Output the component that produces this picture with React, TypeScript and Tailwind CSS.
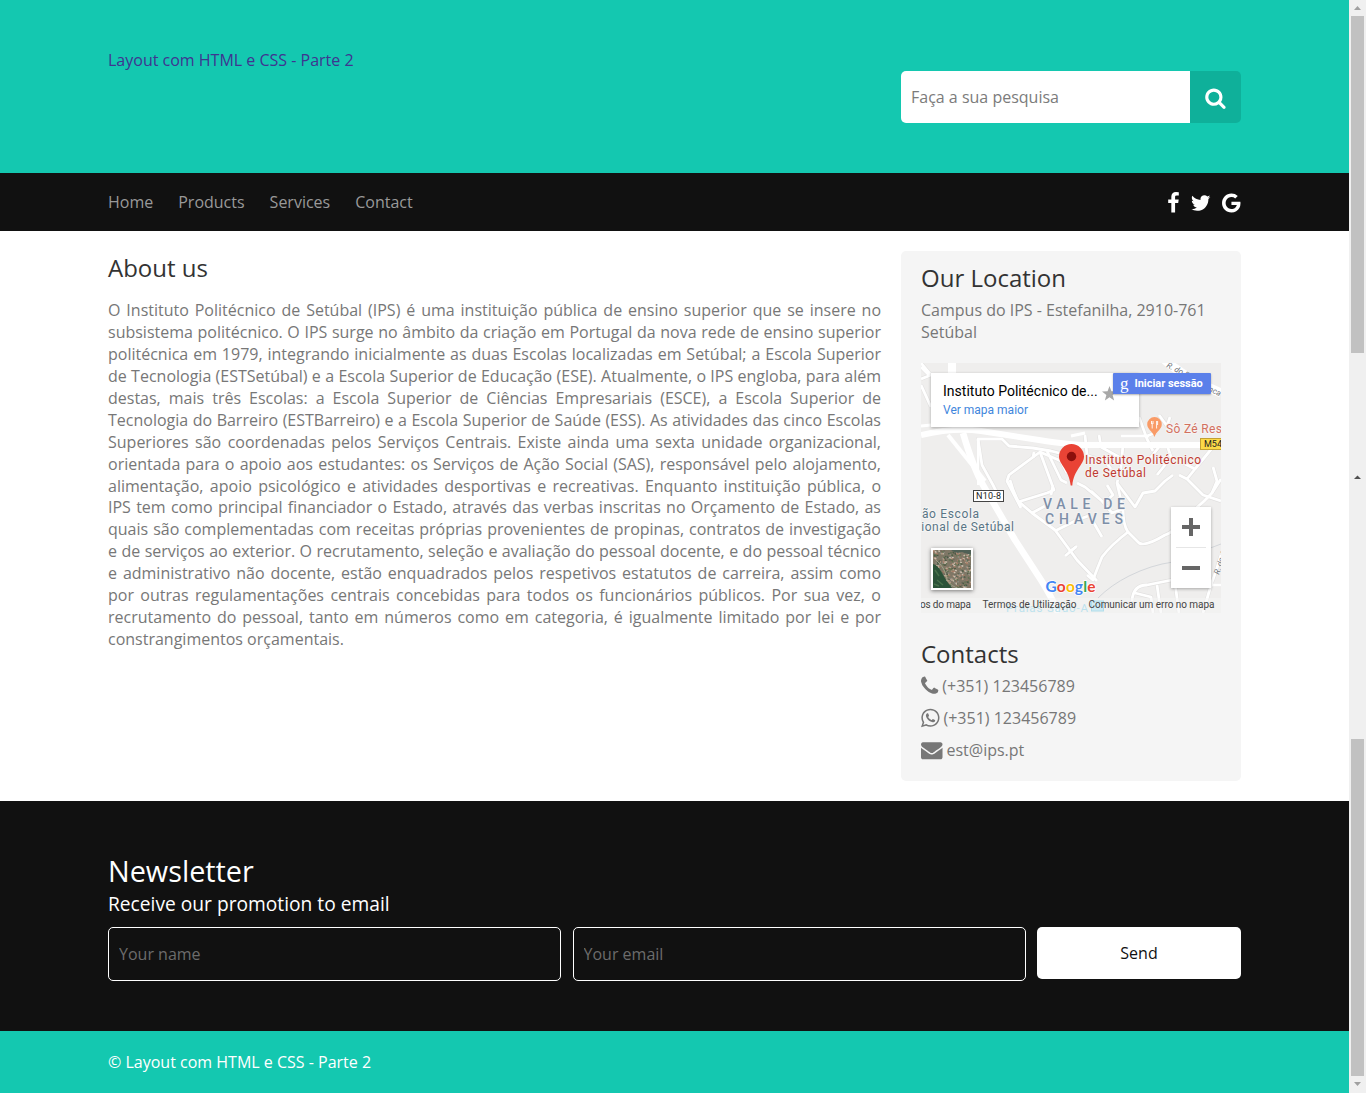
import React from "react";

const ICONS = {
  search: {
    box: "64 0 1728 1792",
    w: "w-[21.2px]",
    d: "M1152 832q0-185-131.5-316.5t-316.5-131.5-316.5 131.5-131.5 316.5 131.5 316.5 316.5 131.5 316.5-131.5 131.5-316.5zm512 832q0 52-38 90t-90 38q-54 0-90-38l-343-342q-179 124-399 124-143 0-273.5-55.5t-225-150-150-225-55.5-273.5 55.5-273.5 150-225 225-150 273.5-55.5 273.5 55.5 225 150 150 225 55.5 273.5q0 220-124 399l343 343q37 37 37 90z",
  },
  facebook: {
    box: "479 0 864 1792",
    w: "w-[11px]",
    d: "M1343 12v264h-157q-86 0-116 36t-30 108v189h293l-39 296h-254v759h-306v-759h-255v-296h255v-218q0-186 104-288.5t277-102.5q147 0 228 12z",
  },
  twitter: {
    box: "108 0 1576 1792",
    w: "w-[19.4px]",
    d: "M1684 408q-67 98-162 167 1 14 1 42 0 130-38 259.5t-115.5 248.5-184.5 210.5-258 146-323 54.5q-271 0-496-145 35 4 78 4 225 0 401-138-105-2-188-64.5t-114-159.5q33 5 61 5 43 0 85-11-112-23-185.5-111.5t-73.5-205.5v-4q68 38 146 41-66-44-105-115t-39-154q0-88 44-163 121 149 294.5 238.5t371.5 99.5q-8-38-8-74 0-134 94.5-228.5t228.5-94.5q140 0 236 102 109-21 205-78-37 115-142 178 93-10 186-50z",
  },
  google: {
    box: "128 0 1505 1792",
    w: "w-[18.5px]",
    d: "M896 786h725q12 67 12 128 0 217-91 387.5t-259.5 266.5-386.5 96q-157 0-299-60.5t-245-163.5-163.5-245-60.5-299 60.5-299 163.5-245 245-163.5 299-60.5q300 0 515 201l-209 201q-123-119-306-119-129 0-238.5 65t-173.5 176.5-64 243.5 64 243.5 173.5 176.5 238.5 65q87 0 160-24t120-60 82-82 51.5-87 22.5-78h-436v-264z",
  },
  phone: {
    box: "192 0 1408 1792",
    w: "w-[17.3px]",
    d: "M1600 1240q0 27-10 70.5t-21 68.5q-21 50-122 106-94 51-186 51-27 0-53-3.5t-57.5-12.5-47-14.5-55.5-20.5-49-18q-98-35-175-83-127-79-264-216t-216-264q-48-77-83-175-3-9-18-49t-20.5-55.5-14.5-47-12.5-57.5-3.5-53q0-92 51-186 56-101 106-122 25-11 68.5-21t70.5-10q14 0 21 3 18 6 53 76 11 19 30 54t35 63.5 31 53.5q3 4 17.5 25t21.5 35.5 7 28.5q0 20-28.5 50t-62 55-62 53-28.5 46q0 9 5 22.5t8.5 20.5 14 24 11.5 19q76 137 174 235t235 174q2 1 19 11.5t24 14 20.5 8.5 22.5 5q18 0 46-28.5t53-62 55-62 50-28.5q14 0 28.5 7t35.5 21.5 25 17.5q25 15 53.5 31t63.5 35 54 30q70 35 76 53 3 7 3 21z",
  },
  whatsapp: {
    box: "128 0 1536 1792",
    w: "w-[18.5px]",
    d: "M1113 974q13 0 97.5 44t89.5 53q2 5 2 15 0 33-17 76-16 39-71 65.5t-102 26.5q-57 0-190-62-98-45-170-118t-148-185q-72-107-71-194v-8q3-91 74-158 24-22 52-22 6 0 18 1.5t19 1.5q19 0 26.5 6.5t15.5 27.5q8 20 33 88t25 75q0 21-34.5 57.5t-34.5 46.5q0 7 5 15 34 73 102 137 56 53 151 101 12 7 22 7 15 0 54-48.5t52-48.5zm-203 530q127 0 243.5-50t200.5-134 134-200.5 50-243.5-50-243.5-134-200.5-200.5-134-243.5-50-243.5 50-200.5 134-134 200.5-50 243.5q0 203 120 368l-79 233 242-77q158 104 345 104zm0-1382q153 0 292.5 60t240.5 161 161 240.5 60 292.5-60 292.5-161 240.5-240.5 161-292.5 60q-195 0-365-94l-417 134 136-405q-108-178-108-389 0-153 60-292.5t161-240.5 240.5-161 292.5-60z",
  },
  envelope: {
    box: "0 0 1792 1792",
    w: "w-[21.5px]",
    d: "M1792 710v794q0 66-47 113t-113 47h-1472q-66 0-113-47t-47-113v-794q44 49 101 87 362 246 497 345 57 42 92.5 65.5t94.5 48 110 24.5h2q51 0 110-24.5t94.5-48 92.5-65.5q170-123 498-345 57-39 100-87zm0-294q0 79-49 151t-122 123q-376 261-468 325-10 7-42.5 31t-54 38-52 32.5-57.5 27-50 9h-2q-23 0-50-9t-57.5-27-52-32.5-54-38-42.5-31q-91-64-262-182.5t-205-142.5q-62-42-117-115.5t-55-136.5q0-78 41.5-130t118.5-52h1472q65 0 112.5 47t47.5 113z",
  },
};

function Icon({ name }: { name: keyof typeof ICONS }) {
  const i = ICONS[name];
  return (
    <svg viewBox={i.box} className={`h-[22px] shrink-0 overflow-visible fill-current ${i.w}`}>
      <path d={i.d} />
    </svg>
  );
}

const ROADS = [
  "M0 0L9 11M0 16L10 12M0 22L10 44M0 4L8 12",
  "M57 122L57 76L81 76L88 83L112 85L130 88L146 92",
  "M57 76L61 102L72 122L76 130",
  "M100 145L86 118L88 112L119 89L140 98L146 110",
  "M113 89L112 95M119 89L133 127L126 130L97 139M126 88L140 117L146 120M132 122L130 132",
  "M89 117Q92 128 97 138L111 150L134 167L156 197L176 218",
  "M111 150L124 143M134 168L156 157L170 152M148 189L156 183",
  "M156 120L164 124L181 138L191 150L202 146M181 138L170 128",
  "M202 82L200 104L196 120L202 146Q202 162 207 169Q190 182 181 194Q176 206 172 217L166 212",
  "M170 155L181 174M196 120L214 144L222 130L234 128L244 118L252 112",
  "M207 169L218 180Q224 184 244 172Q252 170 261 157Q280 142 291 130L300 116",
  "M144 193L155 184M185 138L192 132L186 122",
  "M164 72L166 92M178 72L180 84L198 94M164 92L184 98L190 106",
  "M218 54L226 76L232 88M200 73L228 73M226 73L236 69M238 52L246 63L249 54M240 61L236 65",
  "M246 82L250 94L274 106L266 116L258 112M238 84L230 94L244 102L236 112M274 106L292 84M266 116L282 132L300 138",
  "M211 238Q212 222 226 222L251 217L270 222L300 222M236 222L240 250M254 220L258 250M214 230L230 234L232 250",
  "M300 192Q296 206 290 222L282 250M291 130L296 118L292 104",
];

function MapDrawing() {
  return (
    <svg viewBox="0 0 300 250" className="block h-[250px] w-[300px]" fontFamily="Roboto, sans-serif">
      <rect width="300" height="250" fill="#efeeed" />
      <g fill="none" stroke="#e2e1e0" strokeLinejoin="round">
        {ROADS.map((d) => (
          <path key={d} d={d} strokeWidth="4" />
        ))}
      </g>
      <path d="M177 235Q190 222 208 213Q230 202 252 199Q276 190 300 181" fill="none" stroke="#d3d6da" strokeWidth="1" />
      <g fill="none" stroke="#fff" strokeLinejoin="round">
        {ROADS.map((d) => (
          <path key={d} d={d} strokeWidth="2.8" />
        ))}
        <path d="M31 0V14" strokeWidth="8" />
        <path d="M27 72L64 118" strokeWidth="4" />
        <path d="M42 70Q52 104 62 122L94 177L120 217Q132 236 137 250" strokeWidth="6.5" />
        <path d="M0 72Q34 64 60 68T118 77T165 82H300" strokeWidth="6" />
        <path d="M0 63L20 61M150 73L164 70" strokeWidth="3" />
        <path d="M244 -3Q262 14 300 30" strokeWidth="9" />
      </g>

      <text x="245" y="4" fontSize="8" fontStyle="italic" fill="#6f7378" transform="rotate(27 245 4)">R. do Pa</text>
      <text x="287" y="28" fontSize="8" fontStyle="italic" fill="#6f7378" transform="rotate(24 287 28)">nca</text>
      <text x="298" y="212" fontSize="8" fontStyle="italic" fill="#6f7378" transform="rotate(-72 298 212)">R. do A</text>

      <path d="M233.5 54a7.3 7.3 0 0 1 7.3 7.3c0 5-5 6.5-7.3 12.7c-2.3-6.2-7.3-7.7-7.3-12.7a7.3 7.3 0 0 1 7.3-7.3z" fill="#f99b67" />
      <path d="M230.500 58v3M232 58v3M231.200 60v5.500M235.600 58v7.500M236.600 58v4" stroke="#fff" strokeWidth="0.9" />
      <text x="245" y="69.500" fontSize="12" fill="#d2705f" stroke="#f6f3f1" strokeWidth="2" paintOrder="stroke" textLength="56">Sô Zé Res</text>

      <rect x="279.500" y="75.500" width="24" height="11" fill="#fbd947" stroke="#c2a034" />
      <text x="283" y="84.300" fontSize="9" fill="#222">M54</text>

      <path d="M150.500 81a12.5 12.5 0 0 1 12.5 12.5c0 8-10 13-11.700 29h-1.600c-1.700-16-11.700-21-11.700-29a12.5 12.5 0 0 1 12.5-12.5z" fill="#e94335" />
      <circle cx="150.500" cy="93.500" r="4.700" fill="#8c0f0c" />
      <g fontSize="12" fill="#bf3b32" stroke="#f6f3f1" strokeWidth="2" paintOrder="stroke">
        <text x="164" y="100.500" textLength="116">Instituto Politécnico</text>
        <text x="164" y="113.500" textLength="61">de Setúbal</text>
      </g>
      <rect x="164" y="114" width="64" height="3" fill="#efeeed" />

      <rect x="52.500" y="127.500" width="30" height="11" fill="#fff" stroke="#444" />
      <text x="55" y="136.300" fontSize="9" fill="#222" textLength="25">N10-8</text>

      <g fontSize="12" fill="#5a7585" stroke="#f6f6f5" strokeWidth="2" paintOrder="stroke">
        <text x="-6" y="154.500" textLength="64">ção Escola</text>
        <text x="-6.500" y="167.500" textLength="99.500">cional de Setúbal</text>
      </g>
      <g fontSize="14" fontWeight="500" fill="#7e8fa8" stroke="#f3f3f3" strokeWidth="2" paintOrder="stroke">
        <text x="122" y="146" textLength="82">VALE DE</text>
        <text x="124" y="161" textLength="78">CHAVES</text>
      </g>

      <text x="124.500" y="229" fontSize="15.500" textLength="50" fontFamily="Lato, sans-serif" fontWeight="700" stroke="#fff" strokeWidth="1.500" paintOrder="stroke">
        <tspan fill="#4285f4">G</tspan><tspan fill="#ea4335">o</tspan><tspan fill="#fbbc05">o</tspan><tspan fill="#4285f4">g</tspan><tspan fill="#34a853">l</tspan><tspan fill="#ea4335">e</tspan>
      </text>

      <text x="85" y="249" fontSize="11.500" fill="#83cfe6" textLength="82">Praias Sado-A</text>
      <rect x="170.500" y="238" width="12" height="10" fill="#a9e0f0" stroke="#6cc5e0" />
      <rect y="235" width="300" height="15" fill="#f5f5f5" fillOpacity="0.500" />
      <g fontSize="10" fill="#444">
        <text x="-1" y="245" textLength="51">os do mapa</text>
        <text x="61.500" y="245" textLength="94">Termos de Utilização</text>
        <text x="167.500" y="245" textLength="126">Comunicar um erro no mapa</text>
      </g>
    </svg>
  );
}

const SPECKS = Array.from({ length: 420 }, (_, i) => ({
  x: (i * 17.37) % 38,
  y: (i * 7.913 + ((i * i) % 13)) % 38,
  c: ["#b99a86", "#6d6a5c", "#d2c4b4", "#4b5a45", "#a87d66", "#8b8c80", "#5f7350"][(i * 5 + (i % 9)) % 7],
}));

function Satellite() {
  return (
    <svg viewBox="0 0 38 38" className="block h-[38px] w-[38px]">
      <rect width="38" height="38" fill="#7f7766" />
      {SPECKS.map((s, i) => (
        <rect key={i} x={s.x} y={s.y} width="1.700" height="1.400" fill={s.c} transform={`rotate(${(i * 23) % 60} ${s.x} ${s.y})`} />
      ))}
      <path d="M0 14Q5 15 9 23T19 38H0Z" fill="#2b5238" />
      <path d="M2 20l4 6M4 30l6 5M1 34l5 2" stroke="#47704a" strokeWidth="1.500" />
      <path d="M18 0Q23 4 29 2L38 5V0Z" fill="#4f6055" />
      <path d="M3 10Q12 18 13 26T24 38" fill="none" stroke="#a7ad92" strokeWidth="0.800" />
    </svg>
  );
}

function LocationMap() {
  return (
    <div className="relative h-[250px] w-[300px] overflow-hidden font-[Roboto,sans-serif] font-normal">
      <MapDrawing />
      <div className="absolute left-[10px] top-[10px] h-[54px] w-[208px] bg-white pl-3 pt-[9px] shadow-[0_1px_3px_rgba(0,0,0,0.3)]">
        <div className="whitespace-nowrap text-[14px] font-normal leading-[18px] tracking-[0.02px] text-black">Instituto Politécnico de...</div>
        <div className="mt-px text-[12px] leading-[18px] text-[#3f86dc]">Ver mapa maior</div>
      </div>
      <svg viewBox="0 0 24 24" className="absolute left-[181px] top-[23px] h-[15px] w-[15px] fill-[#a8a8a8]">
        <path d="M12 0l3.100 8.400 8.900.4-7 5.500 2.400 8.700L12 18l-7.400 5 2.400-8.700-7-5.500 8.900-.4z" />
      </svg>
      <div className="absolute left-[192px] top-[10px] flex h-[21px] w-[98px] items-center rounded-[1px] bg-[#5b80ea] pl-[7px] text-white shadow-[0_1px_2px_rgba(0,0,0,0.3)]">
        <span className="w-[14.5px] font-['Liberation_Serif',serif] text-[17px] leading-[14px]">g</span>
        <span className="whitespace-nowrap text-[11px] font-bold tracking-[-0.02px]">Iniciar sessão</span>
      </div>
      <div className="absolute left-[10px] top-[185px] border-2 border-white shadow-[0_1px_4px_rgba(0,0,0,0.5)]">
        <Satellite />
      </div>
      <div className="absolute left-[250px] top-[144px] flex h-[81px] w-[40px] flex-col items-center bg-white shadow-[0_1px_3px_rgba(0,0,0,0.3)]">
        <svg viewBox="0 0 40 81" className="h-[81px] w-[40px]">
          <path d="M11 20h18M20 11v18M11 61h18" stroke="#666" strokeWidth="4" />
          <path d="M5 40.500h30" stroke="#e6e6e6" />
        </svg>
      </div>
    </div>
  );
}

function Scrollbar() {
  return (
    <div className="flex w-[17px] shrink-0 flex-col items-center bg-[#f0f0f0]">
      <svg viewBox="0 0 17 16" className="h-4 w-[17px] shrink-0"><path d="M5 10l3.500-4 3.500 4z" fill="#a0a0a0" /></svg>
      <div className="h-[337px] w-[13px] bg-[#c1c1c1]" />
      <svg viewBox="0 0 17 16" className="mt-[117px] h-4 w-[17px] shrink-0"><path d="M5 9l3.500-3.500L12 9z" fill="#505050" /></svg>
      <div className="mt-[253px] h-[337px] w-[13px] bg-[#c1c1c1]" />
      <svg viewBox="0 0 17 17" className="h-[17px] w-[17px] shrink-0"><path d="M5 6l3.500 4L12 6z" fill="#a0a0a0" /></svg>
    </div>
  );
}

const ABOUT =
  "O Instituto Politécnico de Setúbal (IPS) é uma instituição pública de ensino superior que se insere no subsistema politécnico. O IPS surge no âmbito da criação em Portugal da nova rede de ensino superior politécnica em 1979, integrando inicialmente as duas Escolas localizadas em Setúbal; a Escola Superior de Tecnologia (ESTSetúbal) e a Escola Superior de Educação (ESE). Atualmente, o IPS engloba, para além destas, mais três Escolas: a Escola Superior de Ciências Empresariais (ESCE), a Escola Superior de Tecnologia do Barreiro (ESTBarreiro) e a Escola Superior de Saúde (ESS). As atividades das cinco Escolas Superiores são coordenadas pelos Serviços Centrais. Existe ainda uma sexta unidade organizacional, orientada para o apoio aos estudantes: os Serviços de Ação Social (SAS), responsável pelo alojamento, alimentação, apoio psicológico e atividades desportivas e recreativas. Enquanto instituição pública, o IPS tem como principal financiador o Estado, através das verbas inscritas no Orçamento de Estado, as quais são complementadas com receitas próprias provenientes de propinas, contratos de investigação e de serviços ao exterior. O recrutamento, seleção e avaliação do pessoal docente, e do pessoal técnico e administrativo não docente, estão enquadrados pelos respetivos estatutos de carreira, assim como por outras regulamentações centrais concebidas para todos os funcionários públicos. Por sua vez, o recrutamento do pessoal, tanto em números como em categoria, é igualmente limitado por lei e por constrangimentos orçamentais.";

export default function App() {
  return (
    <div className="flex h-[1093px] w-[1366px] overflow-hidden bg-white font-['Open_Sans',sans-serif] text-[16px] font-normal leading-[22px] text-[#777]">
      <div className="flex w-[1349px] flex-col">
        <header className="flex h-[173px] justify-between bg-[#14c8b0] px-[108px]">
          <a className="mt-[49px] text-[#3f3590]">Layout com HTML e CSS - Parte 2</a>
          <div className="mt-[71px] flex h-[52px] w-[340px] overflow-hidden rounded-[5px]">
            <input placeholder="Faça a sua pesquisa" className="w-[289px] bg-white px-[10px] placeholder:text-[#7b7b7b]" />
            <button className="flex w-[51px] items-center justify-center bg-[#0fb09a] pl-[2px] pt-[2px] text-white">
              <Icon name="search" />
            </button>
          </div>
        </header>

        <nav className="flex h-[58px] items-center justify-between bg-[#111] px-[108px]">
          <div className="flex gap-[25px] text-[#999]">
            <a>Home</a>
            <a>Products</a>
            <a>Services</a>
            <a>Contact</a>
          </div>
          <div className="flex gap-[12px] pr-[0.5px] pt-px text-white">
            <Icon name="facebook" />
            <Icon name="twitter" />
            <Icon name="google" />
          </div>
        </nav>

        <main className="flex h-[570px] justify-between px-[108px] pt-5">
          <section className="w-[773px]">
            <h1 className="text-[24px] leading-[33px] text-[#333]">About us</h1>
            <p className="mt-[16px] text-justify leading-[21.93px]">{ABOUT}</p>
          </section>
          <aside className="h-[530px] w-[340px] rounded-[5px] bg-[#f5f5f5] px-5 pt-[10px]">
            <h2 className="text-[24px] leading-[33px] text-[#333]">Our Location</h2>
            <p className="mb-5 mt-[5px]">Campus do IPS - Estefanilha, 2910-761 Setúbal</p>
            <LocationMap />
            <h2 className="mt-[24px] text-[24px] leading-[33px] text-[#333]">Contacts</h2>
            <div className="mt-[5px] flex flex-col gap-[10px]">
              <div className="flex gap-1"><Icon name="phone" /><span>(+351) 123456789</span></div>
              <div className="flex gap-1"><Icon name="whatsapp" /><span>(+351) 123456789</span></div>
              <div className="flex gap-1"><Icon name="envelope" /><span>est@ips.pt</span></div>
            </div>
          </aside>
        </main>

        <section className="h-[230px] bg-[#111] px-[108px] pt-[50px] text-white">
          <h2 className="text-[28.8px] leading-[40px]">Newsletter</h2>
          <h3 className="text-[19.2px] leading-[26px]">Receive our promotion to email</h3>
          <div className="mt-[10px] flex justify-between">
            <input placeholder="Your name" className="h-[54px] w-[453px] rounded-[5px] border border-white px-[10px] placeholder:text-[#6c6c6c]" />
            <input placeholder="Your email" className="h-[54px] w-[453px] rounded-[5px] border border-white px-[10px] placeholder:text-[#6c6c6c]" />
            <button className="h-[52px] w-[204px] rounded-[5px] bg-white text-[#111]">Send</button>
          </div>
        </section>

        <footer className="flex h-[62px] items-center bg-[#14c8b0] px-[108px] text-white">
          © Layout com HTML e CSS - Parte 2
        </footer>
      </div>
      <Scrollbar />
    </div>
  );
}
